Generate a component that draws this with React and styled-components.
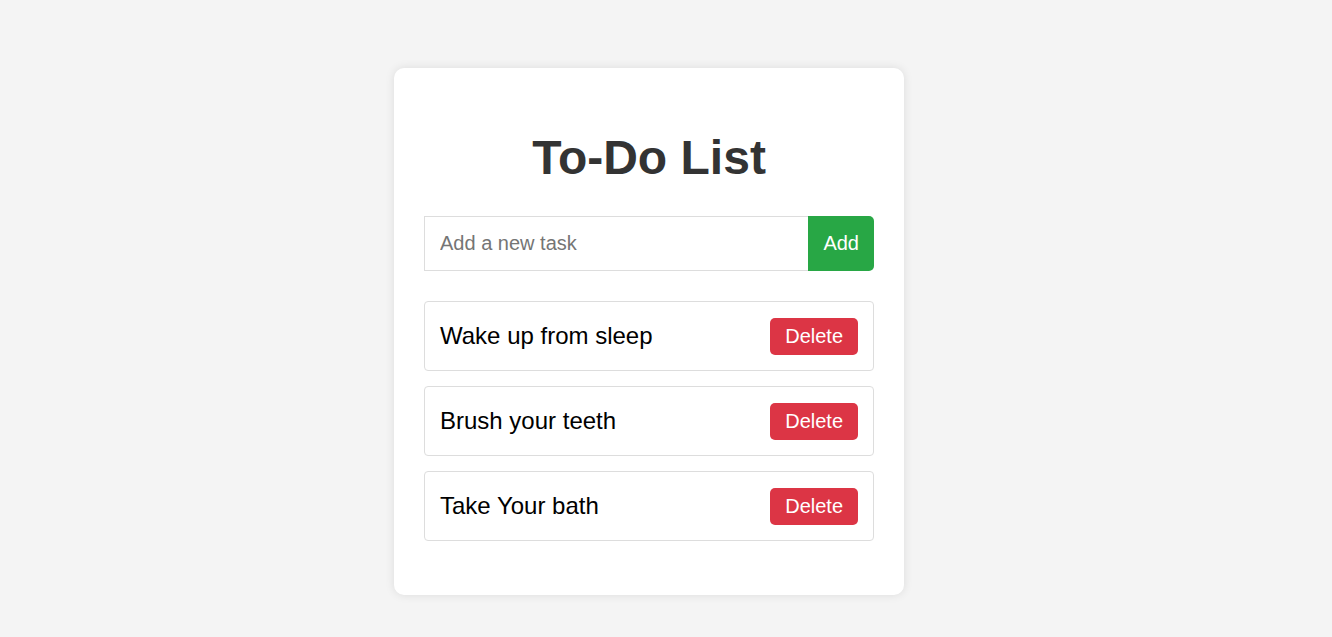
import React from 'react';
import styled, { createGlobalStyle } from 'styled-components';

const GlobalStyle = createGlobalStyle`
  html, body {
    margin: 0;
    padding: 0;
    background-color: #f4f4f4;
    font-family: "Liberation Sans", Arial, sans-serif;
  }
`;

const Page = styled.div`
  min-height: 637px;
  padding: 68px 0 0 394px;
  box-sizing: border-box;
`;

const TodoCard = styled.div`
  width: 510px;
  box-sizing: border-box;
  padding: 30px 30px 54px;
  background-color: #fff;
  border-radius: 10px;
  box-shadow: 0 0 10px rgba(0, 0, 0, 0.1);
`;

const Title = styled.h1`
  font-size: 48px;
  font-weight: bold;
  text-align: center;
  color: #333;
  margin: 32px 0 31px;
`;

const InputRow = styled.div`
  display: flex;
`;

const TaskInput = styled.input`
  flex: 1;
  min-width: 0;
  padding: 15px;
  font-size: 20px;
  font-family: inherit;
  border: 1px solid #ddd;
  border-right: none;
  outline: none;
  color: #333;

  &::placeholder {
    color: #757575;
  }
`;

const AddButton = styled.button`
  padding: 0 15px;
  font-size: 20px;
  font-family: inherit;
  background-color: #28a745;
  color: #fff;
  border: none;
  border-radius: 0 5px 5px 0;
  cursor: pointer;
`;

const TaskList = styled.ul`
  list-style: none;
  margin: 30px 0 0;
  padding: 0;
  display: flex;
  flex-direction: column;
  gap: 15px;
`;

const TaskItem = styled.li`
  display: flex;
  align-items: center;
  justify-content: space-between;
  box-sizing: border-box;
  height: 70px;
  padding: 0 15px;
  border: 1px solid #ddd;
  border-radius: 4px;
  font-size: 24px;
  color: #000;
`;

const DeleteButton = styled.button`
  padding: 7px 15px;
  font-size: 20px;
  font-family: inherit;
  background-color: #dc3545;
  color: #fff;
  border: none;
  border-radius: 5px;
  cursor: pointer;
`;

const tasks = ['Wake up from sleep', 'Brush your teeth', 'Take Your bath'];

const App = () => {
  return (
    <>
      <GlobalStyle />
      <Page>
        <TodoCard>
          <Title>To-Do List</Title>
          <InputRow>
            <TaskInput type="text" placeholder="Add a new task" />
            <AddButton>Add</AddButton>
          </InputRow>
          <TaskList>
            {tasks.map((task) => (
              <TaskItem key={task}>
                <span>{task}</span>
                <DeleteButton>Delete</DeleteButton>
              </TaskItem>
            ))}
          </TaskList>
        </TodoCard>
      </Page>
    </>
  );
};

export default App;
